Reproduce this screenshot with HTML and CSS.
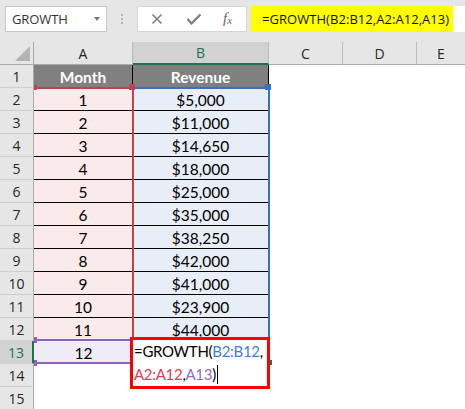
FILE: index.html
```html
<!DOCTYPE html>
<html>
<head>
<meta charset="utf-8">
<link rel="stylesheet" href="styles.css">
</head>
<body>
<div class="topbar">
  <div class="namebox"><span class="nb-text">GROWTH</span><span class="nb-arrow"></span></div>
  <div class="dots"><i></i><i></i><i></i></div>
  <div class="fbtns">
    <svg class="ic" width="12" height="12" viewBox="0 0 12 12"><path d="M1.5 1.5 L10.5 10.5 M10.5 1.5 L1.5 10.5" stroke="#7b7b7b" stroke-width="1.5" fill="none"/></svg>
    <svg class="ic" width="16" height="12" viewBox="0 0 16 12"><path d="M1.5 6 L5.5 10.5 L14.5 1.5" stroke="#7b7b7b" stroke-width="2.2" fill="none"/></svg>
    <span class="fx">f<sub>x</sub></span>
  </div>
  <div class="finput"><span class="hl">=GROWTH(B2:B12,A2:A12,A13)</span></div>
</div>
<div class="sheet">
  <div class="corner"><span class="tri"></span></div>
  <div class="ch">A</div>
  <div class="ch sel">B</div>
  <div class="ch">C</div>
  <div class="ch">D</div>
  <div class="ch last">E</div>

  <div class="rh">1</div><div class="c head ha">Month</div><div class="c head hb">Revenue</div><div class="e"></div><div class="e"></div><div class="e"></div>
  <div class="rh">2</div><div class="c a">1</div><div class="c b">$5,000</div><div class="e"></div><div class="e"></div><div class="e"></div>
  <div class="rh">3</div><div class="c a">2</div><div class="c b">$11,000</div><div class="e"></div><div class="e"></div><div class="e"></div>
  <div class="rh">4</div><div class="c a">3</div><div class="c b">$14,650</div><div class="e"></div><div class="e"></div><div class="e"></div>
  <div class="rh">5</div><div class="c a">4</div><div class="c b">$18,000</div><div class="e"></div><div class="e"></div><div class="e"></div>
  <div class="rh">6</div><div class="c a">5</div><div class="c b">$25,000</div><div class="e"></div><div class="e"></div><div class="e"></div>
  <div class="rh">7</div><div class="c a">6</div><div class="c b">$35,000</div><div class="e"></div><div class="e"></div><div class="e"></div>
  <div class="rh">8</div><div class="c a">7</div><div class="c b">$38,250</div><div class="e"></div><div class="e"></div><div class="e"></div>
  <div class="rh">9</div><div class="c a">8</div><div class="c b">$42,000</div><div class="e"></div><div class="e"></div><div class="e"></div>
  <div class="rh">10</div><div class="c a">9</div><div class="c b">$41,000</div><div class="e"></div><div class="e"></div><div class="e"></div>
  <div class="rh">11</div><div class="c a">10</div><div class="c b">$23,900</div><div class="e"></div><div class="e"></div><div class="e"></div>
  <div class="rh">12</div><div class="c a">11</div><div class="c b">$44,000</div><div class="e"></div><div class="e"></div><div class="e"></div>
  <div class="rh sel">13</div><div class="c a13">12</div><div class="e"></div><div class="e"></div><div class="e"></div><div class="e"></div>
  <div class="rh">14</div><div class="e"></div><div class="e"></div><div class="e"></div><div class="e"></div><div class="e"></div>
  <div class="rh">15</div><div class="e"></div><div class="e"></div><div class="e"></div><div class="e"></div><div class="e"></div>

  <div class="rng blue"></div>
  <div class="rng red"></div>
  <div class="hd hd-red1"></div>
  <div class="hd hd-red2"></div>
  <div class="hd hd-blue"></div>
  <div class="rng purple"></div>
  <div class="hd hd-p1"></div>
  <div class="hd hd-p2"></div>
  <div class="active-mark"></div>
  <div class="editbox">=GROWTH(<span class="rb">B2:B12</span>,<br><span class="rr">A2:A12</span>,<span class="rp">A13</span>)<span class="caret"></span></div>
</div>
</body>
</html>
```
FILE: styles.css
```css
* { box-sizing: border-box; }
html, body { margin: 0; padding: 0; }
body {
  width: 465px;
  height: 409px;
  overflow: hidden;
  background: #ffffff;
  font-family: "Open Sans", "Noto Sans", sans-serif;
}

/* ---------- formula bar ---------- */
.topbar {
  height: 42px;
  background: #e6e6e6;
  display: flex;
  align-items: flex-start;
  padding-top: 6px;
  padding-left: 5px;
}
.namebox {
  width: 102px;
  height: 26px;
  background: #fff;
  border: 1px solid #c6c6c6;
  display: flex;
  align-items: center;
  padding-left: 6px;
  position: relative;
}
.nb-text {
  font-size: 13px;
  color: #333;
  letter-spacing: -0.1px;
}
.nb-arrow {
  position: absolute;
  left: 88px;
  top: 10px;
  width: 0; height: 0;
  border-left: 3.5px solid transparent;
  border-right: 3.5px solid transparent;
  border-top: 4px solid #777;
}
.dots {
  width: 30px;
  height: 26px;
  display: flex;
  flex-direction: column;
  align-items: center;
  justify-content: center;
  gap: 2px;
}
.dots i {
  display: block;
  width: 2px;
  height: 2px;
  background: #b3b3b3;
}
.fbtns {
  width: 110px;
  height: 26px;
  background: #fff;
  border: 1px solid #d4d4d4;
  display: flex;
  align-items: center;
  padding-left: 13px;
  gap: 0;
}
.fbtns .ic:first-child { margin-right: 23px; }
.fbtns .ic:nth-child(2) { margin-right: 21px; }
.fx {
  font-family: "Liberation Serif", serif;
  font-style: italic;
  font-size: 15px;
  color: #666;
  line-height: 1;
  margin-top: -2px;
}
.fx sub {
  font-size: 11px;
  vertical-align: -1px;
}
.finput {
  margin-left: 4px;
  flex: 1;
  height: 26px;
  background: #fff;
  display: flex;
}
.hl {
  background: #ffff00;
  height: 26px;
  line-height: 26px;
  padding-left: 11px;
  width: 202px;
  font-size: 13px;
  letter-spacing: 0.05px;
  color: #111;
  white-space: nowrap;
}

/* ---------- sheet ---------- */
.sheet {
  position: relative;
  display: grid;
  grid-template-columns: 34px 99px 136px 74px 74px 1fr;
  grid-template-rows: 23px repeat(15, 23px);
  font-family: "Lato", "Open Sans", sans-serif;
  font-size: 15.5px;
}
.corner {
  background: #e6e6e6;
  border-right: 1px solid #ababab;
  border-bottom: 1px solid #ababab;
  position: relative;
}
.tri {
  position: absolute;
  right: 3px;
  bottom: 3px;
  width: 0; height: 0;
  border-left: 15px solid transparent;
  border-bottom: 15px solid #b4b4b4;
}
.ch {
  background: #e6e6e6;
  border-right: 1px solid #bcbcbc;
  border-bottom: 1px solid #ababab;
  display: flex;
  align-items: center;
  justify-content: center;
  font-family: "Open Sans", sans-serif;
  font-size: 14px;
  color: #262626;
}
.ch.last { border-right: none; }
.ch.sel {
  background: #d2d2d2;
  color: #217346;
  border-bottom: 2px solid #217346;
}
.rh {
  background: #e6e6e6;
  border-right: 1px solid #ababab;
  border-bottom: 1px solid #cfcfcf;
  display: flex;
  align-items: center;
  justify-content: center;
  font-family: "Open Sans", sans-serif;
  font-size: 14px;
  color: #262626;
}
.rh.sel {
  background: #d2d2d2;
  color: #217346;
  border-right: 2px solid #217346;
}
.c {
  display: flex;
  align-items: center;
  justify-content: center;
  color: #000;
  border-bottom: 1px solid #000;
  padding-top: 1px;
}
.head {
  background: #808080;
  color: #fff;
  font-weight: 700;
}
.ha { border-right: 1px solid #000; }
.hb { border-right: 1px solid #000; }
.a {
  background: #fbeaea;
  border-right: 1px solid #000;
}
.b {
  background: #e8eef8;
  border-right: 1px solid #000;
}
.a13 {
  background: #efecf6;
  border-bottom: none;
}
.e { background: #fff; }

/* ---------- range highlights (overlays) ---------- */
.rng { position: absolute; }
.red {
  left: 34px;
  top: 45px;
  width: 100px;
  height: 254px;
  border-top: 2px solid #c2414c;
  border-right: 2px solid #c2414c;
  border-bottom: 2px solid #c2414c;
}
.blue {
  left: 132px;
  top: 45px;
  width: 138px;
  height: 254px;
  border: 2px solid #3b6fc6;
}
.purple {
  left: 34px;
  top: 297px;
  width: 96px;
  height: 25px;
  border-top: 2px solid #8a62c0;
  border-bottom: 2px solid #8a62c0;
}
.hd { position: absolute; }
.hd-red1 { left: 34px; top: 43px; width: 3px; height: 5px; background: #c2414c; }
.hd-red2 { left: 129px; top: 42px; width: 6px; height: 6px; background: #c2414c; }
.hd-blue { left: 265px; top: 42px; width: 6px; height: 6px; background: #3b6fc6; }
.hd-p1 { left: 34px; top: 295px; width: 3px; height: 6px; background: #8a62c0; }
.hd-p2 { left: 34px; top: 318px; width: 3px; height: 6px; background: #8a62c0; }
.active-mark {
  position: absolute;
  left: 270px;
  top: 318px;
  width: 2px;
  height: 5px;
  background: #217346;
}
.editbox {
  position: absolute;
  left: 130px;
  top: 295px;
  width: 140px;
  height: 52px;
  background: #fff;
  border: 3px solid #ff0000;
  padding: 0 0 0 1px;
  font-size: 15px;
  letter-spacing: -0.3px;
  line-height: 22.5px;
  color: #000;
  white-space: nowrap;
  overflow: hidden;
}
.rb { color: #3f7fd4; }
.rr { color: #e03c52; }
.rp { color: #8f6ccb; }
.caret {
  display: inline-block;
  width: 1px;
  height: 19px;
  background: #000;
  vertical-align: -4px;
  margin-left: 1px;
}
```
